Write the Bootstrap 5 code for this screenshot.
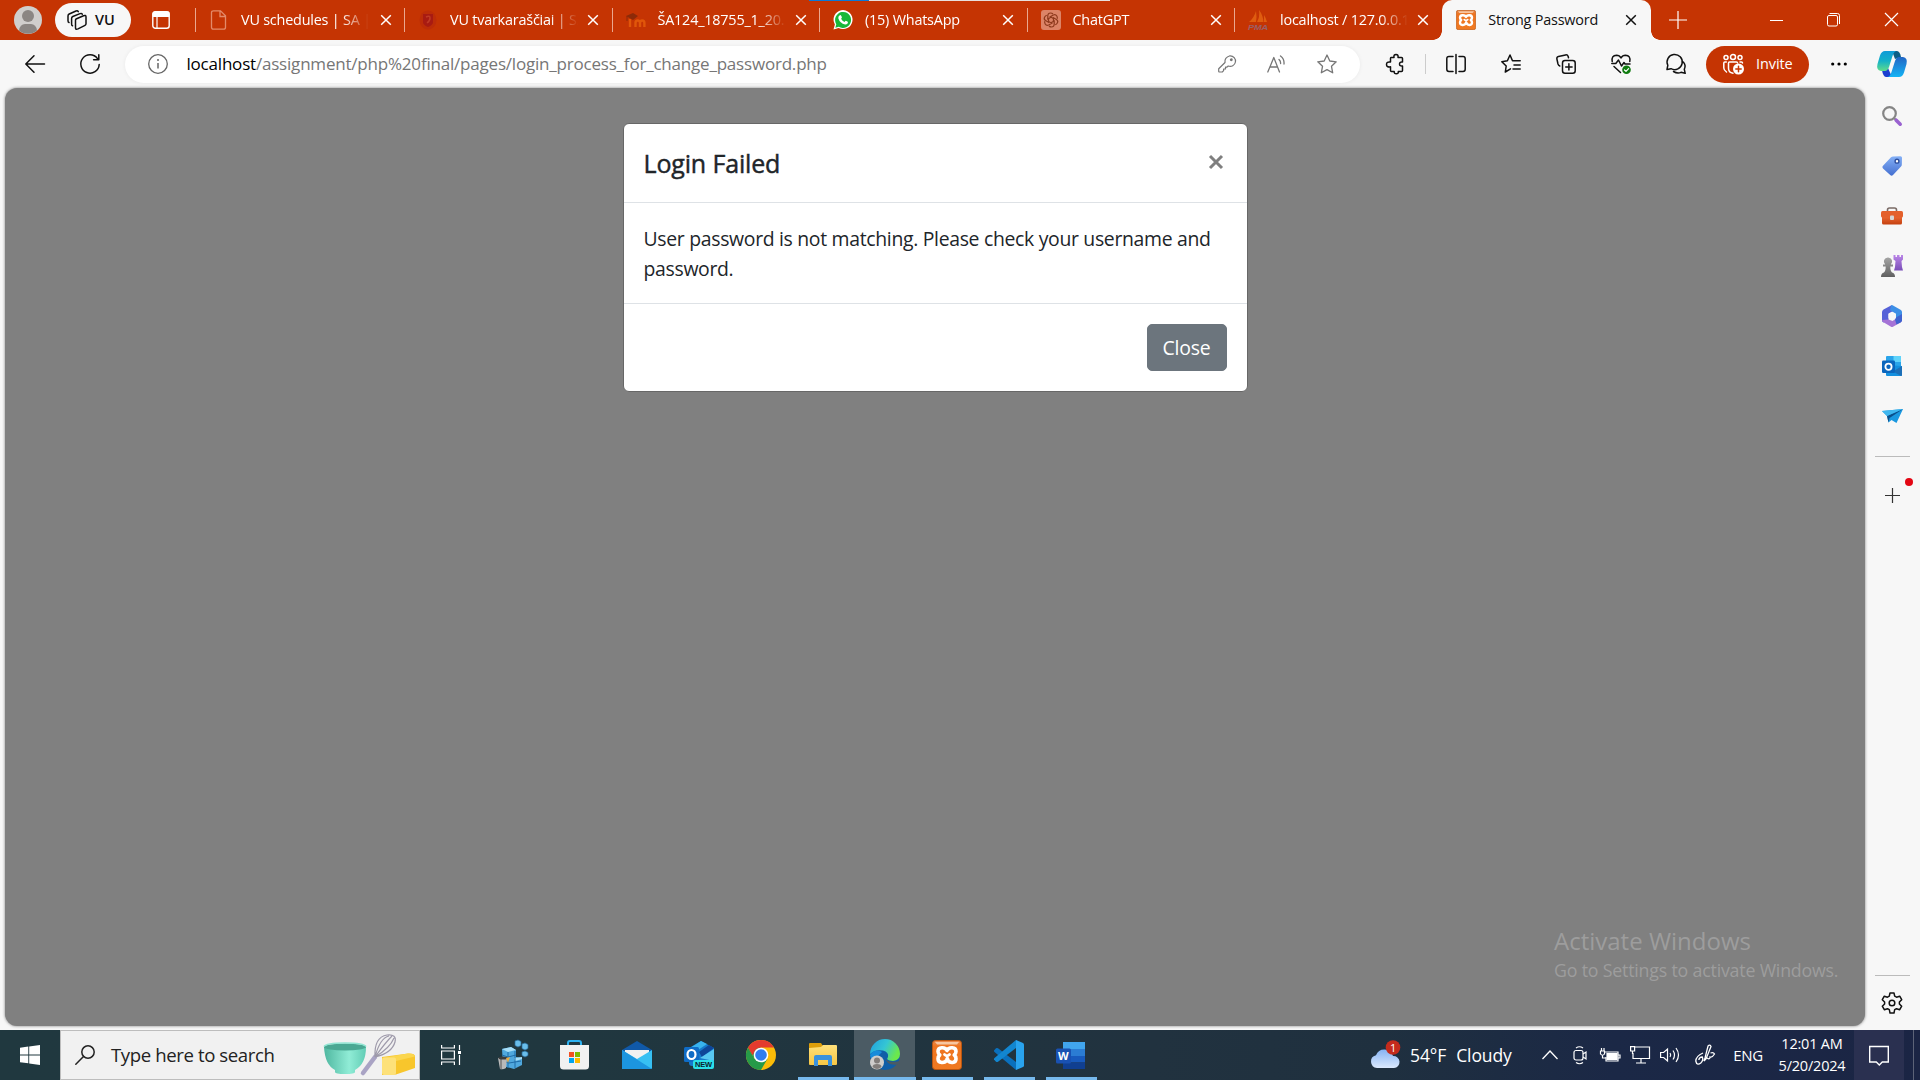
<!DOCTYPE html>
<html lang="en">
<head>
<meta charset="utf-8">
<title>Strong Password</title>
<link href="https://cdn.jsdelivr.net/npm/bootstrap@5.3.0/dist/css/bootstrap.min.css" rel="stylesheet">
<style>
  body { width: 1920px; height: 1080px; overflow: hidden; background: #f7f7f7; font-family: "Open Sans", "Noto Sans", sans-serif; color: #111; }
  svg { display: block; flex: none; overflow: visible; }
  .ln { fill: none; stroke: currentColor; stroke-width: 1.5; stroke-linecap: round; stroke-linejoin: round; }

  /* tab strip */
  .strip { height: 40px; background: #c53403; color: #fff; }
  .strip-cell { width: 55px; }
  .tabmenu { width: 60px; margin-right: 4px; }
  .workspace { width: 76px; height: 34px; background: #f7f7f7; color: #111; font-size: 14.5px; padding-left: 12px; gap: 8px; }
  .tabitem { height: 40px; width: 207.5px; font-size: 14.4px; letter-spacing: -.2px; flex: none; }
  .first-tab { width: 209px; }
  .first-tab .tabtext { margin-right: 2.5px; }
  .tabsep { width: 1px; height: 24px; background: #eaa78f; }
  .tabicon { margin-left: 13px; width: 20px; }
  .tabtext { margin-left: 12px; width: 136px; overflow: hidden; white-space: nowrap; margin-right: 1px; line-height: 20px; -webkit-mask-image: linear-gradient(90deg, #000 100px, transparent 128px); }
  .active-tab { background: #f7f7f7; color: #111; border-radius: 10px 10px 0 0; width: 209px; position: relative; }
  .active-tab::before, .active-tab::after { content: ""; position: absolute; bottom: 0; width: 9px; height: 9px; }
  .active-tab::before { left: -9px; background: radial-gradient(circle at 0 0, transparent 8.5px, #f7f7f7 9px); }
  .active-tab::after { right: -9px; background: radial-gradient(circle at 100% 0, transparent 8.5px, #f7f7f7 9px); }
  .active-tab .tabsep { background: transparent; }
  .active-tab .tabtext { margin-left: 12.7px; -webkit-mask-image: none; }
  .winbtn { width: 57.5px; padding-bottom: 1px; }
  .loadbar { position: absolute; left: 809px; top: 0; width: 301px; height: 1px; background: linear-gradient(90deg, #0a78d7 60px, #e8e0dd 60px); }

  /* toolbar */
  .tools { height: 48px; padding-left: 7px; }
  .tool { width: 55px; height: 48px; }
  .tool-in { width: 50px; height: 37px; }
  .address { width: 1235px; height: 37px; margin-left: 8px; margin-right: 7.5px; background: #fff; border-radius: 19px; color: #767676; box-shadow: 0 0 4px rgba(0,0,0,.06); }
  .infoicon { margin-left: 22.5px; margin-right: 19px; }
  .urltext { font-size: 17px; letter-spacing: -.2px; line-height: 24px; white-space: nowrap; }
  .toolsep { width: 1px; height: 20px; background: #ccc; margin: 0 2.5px; }
  .invite { width: 103px; height: 37px; margin-left: 2.5px; background: #c53403; color: #fff; border-radius: 19px; padding-left: 17px; gap: 12px; font-size: 14.5px; letter-spacing: -.1px; margin-right: 2.5px; }
  .copilot { padding-right: 2.5px; }

  /* page and modal */
  .content-row { height: 942px; }
  .viewport { width: 1860px; height: 938px; margin-left: 5px; background: #808080; border-radius: 12px; box-shadow: 0 0 3px rgba(0,0,0,.5); padding-top: 35px; }
  .dlg { width: 625px; height: 269px; border: 1px solid #676767; border-radius: 6px; background: #fff; color: #212529; }
  .dlg-head { height: 79px; padding: 0 20px; border-bottom: 1px solid #dee2e6; }
  .dlg-title { font-size: 25px; font-weight: 500; letter-spacing: -.15px; line-height: 37px; -webkit-text-stroke: .45px #212529; }
  .dlg-x { margin-right: 4px; margin-bottom: 3px; }
  .dlg-text { padding: 20.5px 20px 0; height: 101px; font-size: 19.4px; letter-spacing: -.31px; line-height: 30px; border-bottom: 1px solid #dee2e6; white-space: nowrap; }
  .dlg-foot { padding-right: 20px; }
  .dlg-btn { width: 80px; height: 47px; font-size: 19.4px; letter-spacing: -.2px; padding: 1px 0 0; border-radius: 5px; background: #6c757d; }
  .watermark { margin: auto 27px 42px auto; width: 284px; color: #9d9d9d; white-space: nowrap; }
  .wm-1 { font-size: 24px; line-height: 31px; }
  .wm-2 { font-size: 17.8px; line-height: 28px; letter-spacing: -.2px; }

  /* side bar */
  .side { width: 55px; padding: 2.5px 1px 0 0; }
  .side-item { height: 50px; }
  .side-rule { width: 35px; height: 1px; background: #bbb; }
  .rule-top { margin-top: 15.5px; }
  .add-item { margin-top: 13px; height: 50px; }
  .side-settings { height: 54px; }
  .alert-dot { position: absolute; right: 6px; top: 8px; width: 8px; height: 8px; background: #e30613; }

  /* task bar */
  .task { height: 50px; background: linear-gradient(90deg, #20383f 0, #20373f 30%, #21323f 60%, #1f303f 72%, #1b2846 84%, #1b2544 100%); color: #fff; }
  .task > * { flex: none; }
  .startbtn { width: 60px; }
  .searchbox { width: 359.5px; height: 50px; background: #f1f1f1; border: 1px solid #bdbdbd; color: #222; padding-left: 14px; font-size: 18.6px; letter-spacing: -.4px; padding-right: 4px; }
  .searchtext { margin-left: 16px; }
  .app { width: 62px; height: 50px; position: relative; }
  .running::after { content: ""; position: absolute; bottom: 0; left: 6px; right: 5px; height: 3px; background: #76b9ed; }
  .current { background: linear-gradient(#4b5b64, #4b5b64) center / 61px 50px no-repeat; }
  .current::after { left: 0; right: 0; }
  .tray { font-size: 15px; white-space: nowrap; margin-left: 268.5px; }
  .weather { font-size: 17.5px; width: 165px; gap: 10px; letter-spacing: -.1px; }
  .trayicon { width: 30px; }
  .penicon { width: 40px; }
  .lang { width: 46px; letter-spacing: -.4px; }
  .clock { width: 82px; font-size: 14.5px; line-height: 22.5px; letter-spacing: -.2px; }
  .notify { width: 50px; height: 50px; background: #2a3050; margin-left: 1px; }
  .peek { width: 1px; height: 50px; background: #5c6377; margin-left: 9px; }
</style>
<script src="https://cdn.jsdelivr.net/npm/bootstrap@5.3.0/dist/js/bootstrap.bundle.min.js"></script>
</head>
<body>

<svg width="0" height="0" class="position-absolute">
  <defs>
    <linearGradient id="gCopA" x1="0" y1="0" x2="0" y2="1"><stop offset="0" stop-color="#0f9bd8"/><stop offset=".5" stop-color="#14b1c8"/><stop offset="1" stop-color="#5fdc8a"/></linearGradient>
    <linearGradient id="gCopB" x1="0" y1="0" x2="0" y2="1"><stop offset="0" stop-color="#2165c4"/><stop offset="1" stop-color="#14b4f5"/></linearGradient>
    <linearGradient id="gTag" x1="0" y1="0" x2="0" y2="1"><stop offset="0" stop-color="#84b0f6"/><stop offset="1" stop-color="#446fd0"/></linearGradient>
    <linearGradient id="gGrey" x1="0" y1="0" x2="0" y2="1"><stop offset="0" stop-color="#a5a5a5"/><stop offset="1" stop-color="#606060"/></linearGradient>
    <linearGradient id="gPur" x1="0" y1="0" x2="0" y2="1"><stop offset="0" stop-color="#bb86e8"/><stop offset="1" stop-color="#7a4fb8"/></linearGradient>
    <linearGradient id="gRed" x1="0" y1="0" x2="0" y2="1"><stop offset="0" stop-color="#f2703a"/><stop offset="1" stop-color="#c4400f"/></linearGradient>
    <linearGradient id="gEdge" x1="0" y1="0" x2="1" y2=".4"><stop offset="0" stop-color="#1e9fe0"/><stop offset=".55" stop-color="#35c6d4"/><stop offset="1" stop-color="#6be84c"/></linearGradient>
    <linearGradient id="gBowl" x1="0" y1="0" x2="1" y2="0"><stop offset="0" stop-color="#4fb7a0"/><stop offset=".6" stop-color="#90ecd6"/><stop offset="1" stop-color="#62cdb5"/></linearGradient>
    <linearGradient id="gFold" x1="0" y1="0" x2="0" y2="1"><stop offset="0" stop-color="#ffe07a"/><stop offset="1" stop-color="#f7c744"/></linearGradient>
    <linearGradient id="gCloud" x1="0" y1="0" x2="0" y2="1"><stop offset="0" stop-color="#86b3f3"/><stop offset="1" stop-color="#dbe9fd"/></linearGradient>
    <linearGradient id="gXam" x1="0" y1="0" x2="0" y2="1"><stop offset="0" stop-color="#e98a4e"/><stop offset=".2" stop-color="#ee7420"/><stop offset="1" stop-color="#f07a22"/></linearGradient>
    <symbol id="xamppLogo" viewBox="0 0 30 30"><rect x=".5" y=".5" width="29" height="29" rx="3" fill="url(#gXam)" stroke="#b95510"/><path d="M3 2h24l-2 2.500H5z" fill="#f7c6a0"/><path d="M15 10.500C13 6.500 6 7 6 11.500c0 1.800.9 2.800 1.800 3.500C6.700 15.800 6 17 6 18.800c0 4.700 7 4.700 8.700 1.200l.6-1.500.6 1.500c1.700 3.500 8.100 3.500 8.100-1.200 0-1.800-.7-3-1.800-3.800.9-.7 1.800-1.700 1.800-3.500C24 7 17 6.500 15 10.500z" fill="none" stroke="#fff" stroke-width="3.600" stroke-linejoin="round"/><path d="M12.500 14.500q2.500 2.500 5 0" fill="none" stroke="#fff" stroke-width="2.800" stroke-linecap="round"/></symbol>
    <symbol id="closeX" viewBox="0 0 12 12"><path d="M1.200 1.200l9.600 9.600M10.800 1.200l-9.600 9.600" stroke="currentColor" stroke-width="1.500" fill="none"/></symbol>
  </defs>
</svg>

<!-- tab strip -->
<div class="strip d-flex align-items-center position-relative">
  <div class="loadbar"></div>
  <div class="strip-cell d-flex justify-content-center">
    <svg width="28" height="28" viewBox="0 0 28 28"><circle cx="14" cy="14" r="14" fill="#d0cecc"/><circle cx="14" cy="10" r="6" fill="#8b8683"/><path d="M5 24.500Q6 18 11 18h6q5 0 6 6.500a14 14 0 0 1-18 0z" fill="#8b8683"/></svg>
  </div>
  <div class="workspace rounded-pill d-flex align-items-center fw-semibold">
    <svg width="20" height="20" viewBox="0 0 20 20" class="ln"><path d="M9 9l7.500-3.200q2.500-1 2.500 1v7q0 1-1 1.500l-7 3.600Q8.500 20 8.500 18v-7.500Q8.500 9.500 9 9zM5.500 15.800Q4.600 15.600 4.600 14V8.500q0-1.400 1.200-2L13 3.600q1.800-.6 2.300.6M2 12.500Q1 12.200 1 10.700V6q0-1.400 1.200-2L9 1q1.600-.6 2.300.6"/></svg>
    <span>VU</span>
  </div>
  <div class="tabmenu d-flex justify-content-center">
    <svg width="18" height="18" viewBox="0 0 18 18"><rect x=".8" y=".8" width="16.400" height="16.400" rx="2.500" fill="none" stroke="#fff" stroke-width="1.400"/><path d="M1 2q0-1 1-1h14q1 0 1 1v3.500H1z" fill="#fff" stroke="#fff"/><path d="M5 6v11" stroke="#fff" stroke-width="1.200"/></svg>
  </div>
  <div class="d-flex">
    <div class="tabitem first-tab d-flex align-items-center"><div class="tabsep"></div>
      <svg class="tabicon" height="20" viewBox="0 0 20 20"><path d="M4.500.8h7l5 5v11.400q0 2-2 2h-10q-2 0-2-2V2.800q0-2 2-2zM11 1v5.500h5.500" fill="none" stroke="#e38a6a" stroke-width="1.300"/></svg>
      <div class="tabtext">VU schedules | SA |</div><svg width="12" height="12"><use href="#closeX"/></svg></div>
    <div class="tabitem d-flex align-items-center"><div class="tabsep"></div>
      <svg class="tabicon" height="20" viewBox="0 0 20 20"><ellipse cx="10" cy="10" rx="8.500" ry="9.500" fill="#bd2d08"/><path d="M5 4h10v8q0 3-5 5-5-2-5-5z" fill="#a81b12"/><path d="M8 7q4-2 4 1t-3 5" stroke="#c03a25" fill="none" stroke-width="1.500"/></svg>
      <div class="tabtext">VU tvarkaraščiai | SA</div><svg width="12" height="12"><use href="#closeX"/></svg></div>
    <div class="tabitem d-flex align-items-center"><div class="tabsep"></div>
      <svg class="tabicon" height="20" viewBox="0 0 20 20"><path d="M4 17V9M9.500 17v-4q0-2.500 2.200-2.500T14 13v4M14 17v-4q0-2.500 2.200-2.500t2.200 2.500v4" stroke="#e0560a" stroke-width="2.400" fill="none"/><path d="M0 6l7-3 5 3-5 4z" fill="#8c2a08"/><path d="M1 6v5" stroke="#8c2a08"/></svg>
      <div class="tabtext">ŠA124_18755_1_20.</div><svg width="12" height="12"><use href="#closeX"/></svg></div>
    <div class="tabitem d-flex align-items-center"><div class="tabsep"></div>
      <svg class="tabicon" height="20" viewBox="0 0 20 20"><path d="M.5 19.500l1.400-5A9.500 9.500 0 1 1 5.600 18z" fill="#fff"/><path d="M2.300 17.800l1-3.600A8 8 0 1 1 5.800 16.700z" fill="#17b83a"/><path d="M6.500 5.500q1-1 1.700.2l.7 1.600q0 .6-.8 1.400 1.200 2.300 3.400 3.200l1.100-1.200q2.600.8 2.400 1.700-.4 2.300-2.900 2.100-5.300-1.200-6.800-6.300-.1-1.800 1.200-2.700z" fill="#fff"/></svg>
      <div class="tabtext">(15) WhatsApp</div><svg width="12" height="12"><use href="#closeX"/></svg></div>
    <div class="tabitem d-flex align-items-center"><div class="tabsep"></div>
      <svg class="tabicon" height="20" viewBox="0 0 20 20"><rect width="20" height="20" rx="3" fill="#dc8467"/><g fill="none" stroke="#8d3a1d" stroke-width="1.200"><path id="petal" d="M10 7.200L6.800 9V5.500Q7 3 9.500 3q1.500 0 2.500 1"/><use href="#petal" transform="rotate(60 10 10)"/><use href="#petal" transform="rotate(120 10 10)"/><use href="#petal" transform="rotate(180 10 10)"/><use href="#petal" transform="rotate(240 10 10)"/><use href="#petal" transform="rotate(300 10 10)"/></g></svg>
      <div class="tabtext">ChatGPT</div><svg width="12" height="12"><use href="#closeX"/></svg></div>
    <div class="tabitem d-flex align-items-center"><div class="tabsep"></div>
      <svg class="tabicon" height="20" viewBox="0 0 20 20"><path d="M1 12Q6 8 8 1q1 6 0 11zM9 12q3-5 2-12 4 5 4.500 12zM16 12V5q2 3 3 7z" fill="#df5c10"/><text x="0" y="19.500" font-family="Liberation Sans" font-size="8" font-weight="bold" font-style="italic" fill="#9a5f66" textLength="20" lengthAdjust="spacingAndGlyphs">PMA</text></svg>
      <div class="tabtext">localhost / 127.0.0.1</div><svg width="12" height="12"><use href="#closeX"/></svg></div>
    <div class="tabitem active-tab d-flex align-items-center"><div class="tabsep"></div>
      <svg class="tabicon" height="20"><use href="#xamppLogo" width="20" height="20"/></svg>
      <div class="tabtext">Strong Password</div><svg width="12" height="12"><use href="#closeX"/></svg></div>
  </div>
  <div class="strip-cell d-flex justify-content-center"><svg width="18" height="18"><path d="M9 0v18M0 9h18" stroke="#fff" stroke-width="1.200"/></svg></div>
  <div class="winbtn ms-auto d-flex justify-content-center"><svg width="13" height="12"><path d="M0 6.500h13" stroke="#fff"/></svg></div>
  <div class="winbtn d-flex justify-content-center"><svg width="13" height="13" fill="none" stroke="#fff"><rect x=".5" y="2.500" width="10" height="10.500" rx="1.500"/><path d="M2.500.5h8q2 0 2 2V11"/></svg></div>
  <div class="winbtn d-flex justify-content-center"><svg width="13" height="13"><path d="M0 0l13 13M13 0L0 13" stroke="#fff" stroke-width="1.200"/></svg></div>
</div>

<!-- toolbar -->
<div class="tools d-flex align-items-center">
  <div class="tool d-flex align-items-center justify-content-center"><svg width="20" height="18" viewBox="0 0 20 18" class="ln"><path d="M19.500 9H1M9 .8L.8 9 9 17.200"/></svg></div>
  <div class="tool d-flex align-items-center justify-content-center"><svg width="20" height="20" viewBox="0 0 20 20" class="ln"><path d="M19.200 10.500A9.200 9.200 0 1 1 17.500 4.600M18.800.8v5h-5.200"/></svg></div>
  <div class="address d-flex align-items-center">
    <svg class="infoicon" width="20" height="20" viewBox="0 0 20 20"><circle cx="10" cy="10" r="9.300" fill="none" stroke="#666" stroke-width="1.300"/><path d="M10 9v5.500" stroke="#666" stroke-width="1.500"/><circle cx="10" cy="6" r="1" fill="#666"/></svg>
    <div class="urltext flex-grow-1"><span class="text-black">localhost</span>/assignment/php%20final/pages/login_process_for_change_password.php</div>
    <div class="d-flex pe-2">
      <div class="tool-in d-flex align-items-center justify-content-center"><svg width="18" height="18" viewBox="0 0 18 18" class="ln"><path stroke-width="1.200" d="M12 .8A5.300 5.300 0 1 1 10.200 11L9 12.200H7.500V14H5.600v1.700L4.300 17H1.500q-.8 0-.8-.8v-2.500L7 7.500Q6.300 2.500 12 .8z"/><circle cx="13.300" cy="4.700" r=".7"/></svg></div>
      <div class="tool-in d-flex align-items-center justify-content-center"><svg width="20" height="18" viewBox="0 0 20 18" class="ln"><path stroke-width="1.300" d="M.8 17L6.800 2.500 12.500 17M3 12h7.500M12 4.500q1.800 1.600 1.600 4M13.500 1q4 3 3.500 8"/></svg></div>
      <div class="tool-in d-flex align-items-center justify-content-center"><svg width="20" height="20" viewBox="0 0 20 20" class="ln"><path stroke-width="1.300" d="M10 1l2.800 6 6.400.8-4.700 4.500 1.200 6.500-5.700-3.200-5.700 3.200 1.200-6.500L.8 7.800 7.200 7z"/></svg></div>
    </div>
  </div>
  <div class="tool d-flex align-items-center justify-content-center"><svg width="18" height="20" viewBox="0 0 18 20" class="ln"><path d="M5 3.500h3q-.6-3 2-3t2 3h3.500q1 0 1 1V8q-3-.4-3 2t3 2v4.500q0 1-1 1H12.300q.3 2.200-2 2.200t-2.100-2.200H5.500q-1 0-1-1V12.800q-4 .6-4-2.400t4-2.400V4.500q0-1 .5-1z"/></svg></div>
  <div class="toolsep"></div>
  <div class="tool d-flex align-items-center justify-content-center"><svg width="20" height="20" viewBox="0 0 20 20" class="ln"><path d="M7 2.500H3Q.8 2.500.8 4.700v10.600q0 2.200 2.200 2.200h4M10 .5v19M13 2.500h4q2.200 0 2.200 2.200v10.600q0 2.200-2.200 2.200h-4"/></svg></div>
  <div class="tool d-flex align-items-center justify-content-center"><svg width="20" height="20" viewBox="0 0 20 20" class="ln"><path d="M9.500 14.800l-5.200 3.200.9-6L.8 7.700l5.600-.9L9 1l2.500 5.800h7.700M13 11h6.200M12 15h7.200"/></svg></div>
  <div class="tool d-flex align-items-center justify-content-center"><svg width="20" height="20" viewBox="0 0 20 20" class="ln"><rect x="6.500" y="6.500" width="12.700" height="12.700" rx="2.500"/><path d="M12.900 9.700v6.400M9.700 12.900h6.400M3.800 12Q2.500 11.500 2 10L.9 5q-.4-2 1.600-2.600L9.500.9q2-.4 2.700 1.600l.3 1.200"/></svg></div>
  <div class="tool d-flex align-items-center justify-content-center"><svg width="20" height="20" viewBox="0 0 20 20" class="ln"><path d="M1.200 7.500Q.2 1.500 5.500 1.200 8.500 1.200 10 4q1.500-2.800 4.500-2.800 5.300.3 4.300 6.300M.8 9.500h4L7.500 6l3 6 2.500-3.500 1 1.500h5M3 12.500l6.500 6"/><circle cx="15.500" cy="15.800" r="4.300" fill="#107c10" stroke="none"/><path d="M13.500 16l1.500 1.400 2.600-2.800" stroke="#fff" stroke-width="1.200"/></svg></div>
  <div class="tool d-flex align-items-center justify-content-center"><svg width="20" height="20" viewBox="0 0 20 20" class="ln"><path d="M1 15.500l.8-4.200A7.600 7.600 0 1 1 5 14.700zM7.500 17.500q4 2.500 7.500.8l4.200 1-.9-4q2-4-1-7.300"/></svg></div>
  <div class="invite d-flex align-items-center">
    <svg width="21" height="20" viewBox="0 0 21 20" class="ln"><circle cx="3" cy="3.500" r="2"/><circle cx="10" cy="3" r="2.500"/><circle cx="17" cy="3.500" r="2"/><path d="M3.500 18Q.8 16 .8 14V9q0-1 1-1h1.500M17 8h1.500q1 0 1 1M10 19.200q-4.500-.7-4.500-5V9q0-1 1-1h7q1 0 1 1"/><circle cx="15.500" cy="15" r="5.500" fill="#fff" stroke="none"/><path d="M15.500 12.300v5.400M12.800 15h5.400" stroke="#c53403"/></svg>
    <span>Invite</span>
  </div>
  <div class="tool d-flex align-items-center justify-content-center"><svg width="16" height="4"><circle cx="1.700" cy="2" r="1.600"/><circle cx="8" cy="2" r="1.600"/><circle cx="14.300" cy="2" r="1.600"/></svg></div>
  <div class="copilot flex-grow-1 d-flex justify-content-center"><svg width="30" height="26" viewBox="0 0 30 26"><path d="M20 0q3 .5 4 6l-6 2-3-8z" fill="#0c5f86"/><path d="M9 26q-3-.5-4-7l6-2 4 9z" fill="#1b3fd0"/><path d="M8 0h12q-3 0-4.500 5l-3.500 11q-1.500 4-4 4H4q-5-1-3.500-7L3 4.500Q4.500 0 8 0z" fill="url(#gCopA)"/><path d="M22 26H10q3 0 4.500-5L18 10q1.500-4 4-4h4q5 1 3.500 7L27 21.500Q25.500 26 22 26z" fill="url(#gCopB)"/></svg></div>
</div>

<div class="content-row d-flex">
  <!-- page -->
  <main class="viewport d-flex flex-column">
    <div class="dlg align-self-center d-flex flex-column">
      <div class="dlg-head d-flex align-items-center justify-content-between">
        <h5 class="dlg-title m-0">Login Failed</h5>
        <svg class="dlg-x" width="14" height="14"><path d="M1 1l12 12M13 1L1 13" stroke="#7f7f7f" stroke-width="3"/></svg>
      </div>
      <div class="dlg-text">User password is not matching. Please check your username and<br>password.</div>
      <div class="dlg-foot flex-grow-1 d-flex align-items-center justify-content-end">
        <button type="button" class="btn btn-secondary dlg-btn">Close</button>
      </div>
    </div>
    <div class="watermark"><div class="wm-1">Activate Windows</div><div class="wm-2">Go to Settings to activate Windows.</div></div>
  </main>

  <!-- side bar -->
  <aside class="side d-flex flex-column align-items-center">
    <div class="side-item d-flex align-items-center"><svg width="20" height="20" viewBox="0 0 20 20"><circle cx="7.500" cy="7.500" r="6.300" fill="none" stroke="#858585" stroke-width="2.200"/><path d="M12 12l2.500 2.500" stroke="#888" stroke-width="2"/><path d="M14.200 14.200l4 4" stroke="#9a62d0" stroke-width="3.600" stroke-linecap="round"/></svg></div>
    <div class="side-item d-flex align-items-center"><svg width="20" height="20" viewBox="0 0 20 20"><path d="M11 .5l7.500-.2q1.500 0 1.500 1.500l-.2 7q0 1-.8 1.800l-8 8.500q-1.400 1.200-2.800 0L1 12.500q-1.400-1.500 0-2.800L9 1.300Q10 .5 11 .5z" fill="url(#gTag)"/><circle cx="15" cy="5.200" r="1.900" fill="#fff" stroke="#2f509e" stroke-width="1.400"/></svg></div>
    <div class="side-item d-flex align-items-center"><svg width="22" height="18" viewBox="0 0 22 18"><path d="M6.500 5V3Q6.500 1 8.500 1h5q2 0 2 2v2" fill="none" stroke="#7a6b66" stroke-width="1.600"/><rect x="1" y="8" width="20" height="9.500" rx="1.500" fill="url(#gRed)"/><rect y="4" width="22" height="6.500" rx="1.500" fill="#e4602c"/><rect x="9" y="8.500" width="4" height="4.500" rx="1" fill="#d6d6d6"/></svg></div>
    <div class="side-item d-flex align-items-center"><svg width="22" height="22" viewBox="0 0 22 22"><path d="M12.500 0h2v2H16V0h2.500v2H20V0h2v4.500L20.500 6l.5 6 1 3.500h-9l1-3.500.5-6-2-1.500z" fill="url(#gPur)"/><path d="M7 2.500a4 4 0 0 1 2.800 7H12v2H9.300q0 4.500 1.700 6 3 .5 3 4.500H0q0-4 3-4.500 1.700-1.500 1.700-6H2v-2h2.200A4 4 0 0 1 7 2.500z" fill="url(#gGrey)"/></svg></div>
    <div class="side-item d-flex align-items-center"><svg width="20" height="22" viewBox="0 0 20 22"><path d="M9.500.3L1.500 4.500Q0 5.500 0 7v8.500q0 1.500 1.500 2l5-2.500V8.500L13 5z" fill="#5561d8"/><path d="M9 .5q1-.8 2 0l7.500 4.200Q20 5.500 20 7v7.500l-6-1.500V8.800L8 5.200z" fill="#3d8fe6"/><path d="M20 13.500v2q0 1-1.500 2L11 21.700q-1 .5-2 0l-7.500-4.400Q0 16.500 0 15l6.500-.5 4 1.500 4.500-3z" fill="#a573d6"/><path d="M20 9v6.500q0 1-1.500 2l-4 2L13 14.500l1-2z" fill="#3f62cf"/><path d="M10 7l3.500 2v4L10 15l-3.500-2V9z" fill="#f7f7f7"/></svg></div>
    <div class="side-item d-flex align-items-center"><svg width="20" height="20" viewBox="0 0 20 20"><rect x="4" width="15" height="11" rx="1" fill="#2aa4ea"/><path d="M11.500 0H19v6h-7.500z" fill="#5fd3fa"/><path d="M4 19V9l16 1v9q0 1-1 1H5q-1 0-1-1z" fill="#1490df"/><path d="M20 10l-9 5.500 8 4.500q1 0 1-1z" fill="#1d6fb7"/><rect y="4.500" width="13" height="12.500" rx="1.200" fill="#0b66bd"/><circle cx="6.500" cy="10.700" r="3.100" fill="none" stroke="#fff" stroke-width="1.800"/></svg></div>
    <div class="side-item d-flex align-items-center"><svg width="21" height="14" viewBox="0 0 21 14"><path d="M0 2L21 0l-6.500 14-5-3-3 2.500L5 7z" fill="#1a98e0"/><path d="M5 7L21 0 7.500 9l-1 4.500z" fill="#0b4f8a"/><path d="M0 2L21 0 5 7z" fill="#3fb7ef"/></svg></div>
    <div class="side-rule rule-top"></div>
    <div class="add-item w-100 d-flex align-items-center justify-content-center position-relative"><svg width="15" height="15"><path d="M7.500 0v15M0 7.500h15" stroke="#333" stroke-width="1.200"/></svg><span class="alert-dot rounded-circle"></span></div>
    <div class="side-rule mt-auto"></div>
    <div class="side-settings d-flex align-items-center"><svg width="22" height="22" viewBox="0 0 22 22" class="ln"><path d="M9 1h4l.7 3.200 1.800 1 3.200-1 2 3.500L18.400 10v2l2.300 2.200-2 3.500-3.200-1-1.800 1L13 21H9l-.7-3.300-1.800-1-3.200 1-2-3.500L3.600 12v-2L1.300 7.700l2-3.500 3.200 1 1.800-1z"/><circle cx="11" cy="11" r="2.800"/></svg></div>
  </aside>
</div>

<!-- task bar -->
<footer class="task d-flex align-items-center">
  <div class="startbtn d-flex justify-content-center"><svg width="20" height="20" fill="#fff"><path d="M0 2.800l8.300-1.200v7.900H0zM9.200 1.500L20 0v9.500H9.200zM0 10.400h8.300v7.900L0 17.200zM9.200 10.400H20V20L9.200 18.500z"/></svg></div>
  <div class="searchbox d-flex align-items-center">
    <svg width="20" height="20" viewBox="0 0 20 20" class="ln"><circle cx="13" cy="7" r="6.200"/><path d="M8.500 11.500L.8 19.200"/></svg>
    <span class="searchtext">Type here to search</span>
    <svg width="91" height="42" viewBox="0 0 91 42" class="ms-auto">
      <path d="M0 13q1 18 11 23v2q0 2 10 2t10-2v-2Q42 30 42 13z" fill="url(#gBowl)"/><ellipse cx="21" cy="13" rx="21" ry="3.500" fill="#4aa893"/><path d="M0 12.500q2-3.500 21-3.500t21 3.500" stroke="#8fe5d2" stroke-width="1.500" fill="none"/>
      <path d="M39 39l12-16" stroke="#a9a3c4" stroke-width="4.500" stroke-linecap="round"/><g fill="none" stroke="#9e9aaa" stroke-width="1.200"><path d="M51 23Q50 3 63 1q10-1 8 7-3 11-20 15M51 23Q56 4 65 2M51 23Q66 14 70 4M51 23Q61 9 68 2"/></g>
      <path d="M58 23l26-3.500q7-.5 7 3V34l-19 6.500-14 .5z" fill="#f8c62c"/><path d="M58 24l26-4.500q7 0 7 3L72 27z" fill="#fbd64e"/><rect x="58" y="23.500" width="14" height="17.500" rx="2" fill="#fde17a"/>
    </svg>
  </div>
  <div class="d-flex">
    <div class="app d-flex align-items-center justify-content-center"><svg width="20" height="20" fill="none" stroke="#fff" stroke-width="1.200"><path d="M.6 0v3h12.800V0M.6 20v-3h12.800v3M.6 6h12.800v8H.6zM18.500 0v5M18.500 10v10"/><path d="M17 6h3v3h-3z" fill="#fff" stroke="none"/></svg></div>
    <div class="app d-flex align-items-center justify-content-center"><svg width="30" height="30" viewBox="0 0 30 30"><path d="M4 9l9-2 5 3v7l6 1v7l-8 4-11-3z" fill="#4fa8de"/><path d="M4 9l9-2 5 3-8 2zM16 18l8-1v2l-7 2z" fill="#a6def8"/><path d="M10 12v16M17 11v17M4 15l6 2 8-2M4 21l7 2 12-2" stroke="#1f6ca8" fill="none"/><g fill="#69bdea" stroke="#286e9f" stroke-width=".7"><path d="M17 1l3-1 3 1.500v4L20 7l-3-1.500zM24 4l3-1 3 1.500v4L27 10l-3-1.500zM24 12l3-1 3 1.500v3L27 17l-3-1.500z"/></g><path d="M0 18l9-1-1 11q-3 2-6 1z" fill="#b9b9b9"/><path d="M3 19v10" stroke="#555"/><ellipse cx="5" cy="18" rx="4.500" ry="1.500" fill="#3c3c3c"/><path d="M8 18l4-1-2 6z" fill="#e8ac45"/></svg></div>
    <div class="app d-flex align-items-center justify-content-center"><svg width="29" height="30" viewBox="0 0 29 30"><path d="M8 6V3q0-2 2-2h9q2 0 2 2v3" fill="none" stroke="#2db2f2" stroke-width="2"/><path d="M0 5h29v21q0 3.500-3.500 3.500h-22Q0 29.500 0 26z" fill="#f1f1f1"/><path fill="#f25022" d="M9 12h5v5H9z"/><path fill="#7fba00" d="M15 12h5v5h-5z"/><path fill="#00a4ef" d="M9 18h5v5H9z"/><path fill="#ffb900" d="M15 18h5v5h-5z"/></svg></div>
    <div class="app d-flex align-items-center justify-content-center"><svg width="30" height="28" viewBox="0 0 30 28"><path d="M0 9L15 0l15 9v4H0z" fill="#1059a8"/><path d="M3 9h24v9H3z" fill="#f1f1f1"/><path d="M0 9l15 9 15-9v18q0 1-1 1H1q-1 0-1-1z" fill="#37c0f3"/><path d="M0 9l30 19H1q-1 0-1-1z" fill="#1c95df"/></svg></div>
    <div class="app d-flex align-items-center justify-content-center"><svg width="30" height="28" viewBox="0 0 30 28"><path d="M5 7L17 0l13 7v15q0 3-3 3H8q-3 0-3-3z" fill="#1679cc"/><path d="M6 7l11-7 6 3-12 8z" fill="#38b3ee"/><path d="M15 11l10-7 5 3-12 9z" fill="#0f4598"/><path d="M30 8v12L16 17z" fill="#58c8f2"/><rect y="6" width="15" height="15" rx="1.500" fill="#0f6cc6"/><ellipse cx="7.500" cy="13.500" rx="4" ry="4.500" fill="none" stroke="#fff" stroke-width="2.200"/><rect x="9" y="19" width="21" height="9" rx="2" fill="#2be0ea"/><text x="11" y="26.300" font-family="Liberation Sans" font-size="7.500" font-weight="bold" fill="#0a2430" textLength="17">NEW</text></svg></div>
    <div class="app d-flex align-items-center justify-content-center"><svg width="30" height="30" viewBox="0 0 30 30"><circle cx="15" cy="15" r="15" fill="#fbbc08"/><path d="M2 7.500A15 15 0 0 0 15 30l6.500-11.200L15 15l-6.500 3.700z" fill="#269a48"/><path d="M2 7.500L8.500 18.800 15 9V7.500z" fill="#269a48"/><path d="M2 7.500A15 15 0 0 1 28 7.500H15A7.500 7.500 0 0 0 8 13l-1.500 2.300z" fill="#e33b2e"/><circle cx="15" cy="15" r="7.300" fill="#fff"/><circle cx="15" cy="15" r="5.800" fill="#2f7df0"/></svg></div>
    <div class="app running d-flex align-items-center justify-content-center"><svg width="28" height="24" viewBox="0 0 28 24"><path d="M0 1q0-1 1-1h11l2 3v3H0z" fill="#dd9e0a"/><path d="M0 5l12-1 2-2h13q1 0 1 1v18q0 1-1 1H1q-1 0-1-1z" fill="url(#gFold)"/><path d="M5 23V14q0-2 2-2h14q2 0 2 2v9h-4v-6H9v6z" fill="#3a92dd"/></svg></div>
    <div class="app running current d-flex align-items-center justify-content-center"><svg width="30" height="30" viewBox="0 0 30 30"><circle cx="15" cy="15" r="15" fill="#0f5ea8"/><path d="M0 14A15 15 0 0 1 30 14q0 6-7 7-8-.5-5-4 1-5-5-6.500Q5 9 0 14z" fill="url(#gEdge)"/><path d="M0 15q5-7 12-3-7 5-2 14-9-3-10-11z" fill="#178cdb"/><path d="M15 17q0 6 13 4.500l2-1v3l-2 1q-12 1.500-13-7.500z" fill="#4b5b64"/><circle cx="7" cy="22.500" r="7" fill="#cfcdcb"/><circle cx="7" cy="20.500" r="3" fill="#827d7a"/><path d="M2.500 27q0-3 4.500-3t4.500 3q-4.500 4-9 0z" fill="#827d7a"/></svg></div>
    <div class="app running d-flex align-items-center justify-content-center"><svg width="30" height="30"><use href="#xamppLogo"/></svg></div>
    <div class="app running d-flex align-items-center justify-content-center"><svg width="30" height="30" viewBox="0 0 30 30"><path d="M0 10.500l2-2.300q1-.6 2 0L22 22v8L.5 12q-.8-.8-.5-1.500z" fill="#0a70bd"/><path d="M0 19.500l2 2.300q1 .6 2 0L22 8V0L.5 18q-.8.800-.5 1.500z" fill="#1286d0"/><path d="M22 0l7 3q1 .5 1 1.500v21q0 1-1 1.500l-7 3z" fill="#29a3ee"/></svg></div>
    <div class="app running d-flex align-items-center justify-content-center"><svg width="29" height="27" viewBox="0 0 29 27"><path d="M7 0h22v7H7z" fill="#41a5ee"/><path d="M7 7h22v7H7z" fill="#2b7cd3"/><path d="M7 14h22v6.500H7z" fill="#185abd"/><path d="M7 20.500h22V27H7z" fill="#103f91"/><rect y="6.500" width="15" height="15" rx="1.500" fill="#1951b2"/><text x="2" y="18" font-family="Open Sans" font-size="11" font-weight="bold" fill="#fff">W</text></svg></div>
  </div>
  <div class="tray d-flex align-items-center">
    <div class="weather d-flex align-items-center">
      <svg width="30" height="27" viewBox="0 0 30 27"><path d="M7 26a6.500 6.500 0 0 1-1-12.800A9 9 0 0 1 23 14a6 6 0 0 1 1 12z" fill="url(#gCloud)"/><circle cx="23" cy="5.500" r="7.300" fill="#c42b1c"/><text x="23" y="9.500" text-anchor="middle" font-family="Open Sans" font-size="11" fill="#fff">1</text></svg>
      <span>54°F</span><span>Cloudy</span>
    </div>
    <div class="trayicon d-flex justify-content-center"><svg width="16" height="10"><path d="M.5 9L8 1l7.500 8" stroke="#fff" stroke-width="1.300" fill="none"/></svg></div>
    <div class="trayicon d-flex justify-content-center"><svg width="14" height="18" fill="none" stroke="#fff" stroke-width="1.200"><rect x="1" y="4.500" width="9" height="9.500" rx="2"/><path d="M10 8l3-2v7l-3-2M3 2q3.500-2.500 7 0M3 16.500q3.500 2.500 7 0"/></svg></div>
    <div class="trayicon d-flex justify-content-center"><svg width="20" height="14" fill="none" stroke="#fff" stroke-width="1.200"><path d="M4 4h14v9H6V9"/><path d="M7 5.500h10v6H7z" fill="#fff"/><path d="M18 7h2v3h-2M.5 3h4v3q-2 2.500-4 0zM1.500 0v3M4 0v3M2.500 7v3H6"/></svg></div>
    <div class="trayicon d-flex justify-content-center"><svg width="20" height="18" fill="none" stroke="#fff" stroke-width="1.200"><path d="M5 1h14.500v11.500H3V7M11 13v4M6 17h10M.6.600h4V5H.6zM2.500 5v3"/></svg></div>
    <div class="trayicon d-flex justify-content-center"><svg width="20" height="16" fill="none" stroke="#fff" stroke-width="1.200"><path d="M.6 5.500h3L7.500 2v12L3.600 10.500h-3zM10 6q1.500 2 0 4M13 3.500q3 4.500 0 9M16 1q5 7 0 14"/></svg></div>
    <div class="penicon d-flex justify-content-center"><svg width="20" height="22" fill="none" stroke="#fff" stroke-width="1.300"><path d="M10 14L13 2q2-2 3 .5L11 15l-2 2zM8 9Q1 12 .8 17q1 5 5 2 3-3 1.500-6-3 0-3.500 3M12 14q3 2 3-1 2 1 4.500-3-1-2-4-1"/></svg></div>
    <div class="lang text-center">ENG</div>
    <div class="clock text-center">12:01 AM<br>5/20/2024</div>
  </div>
  <div class="notify d-flex align-items-center justify-content-center"><svg width="20" height="22" fill="none" stroke="#fff" stroke-width="1.400"><path d="M.7 2.500h18.600V18h-6l-3 3-3-3H.7z"/></svg></div>
  <div class="peek"></div>
</footer>
</body>
</html>
